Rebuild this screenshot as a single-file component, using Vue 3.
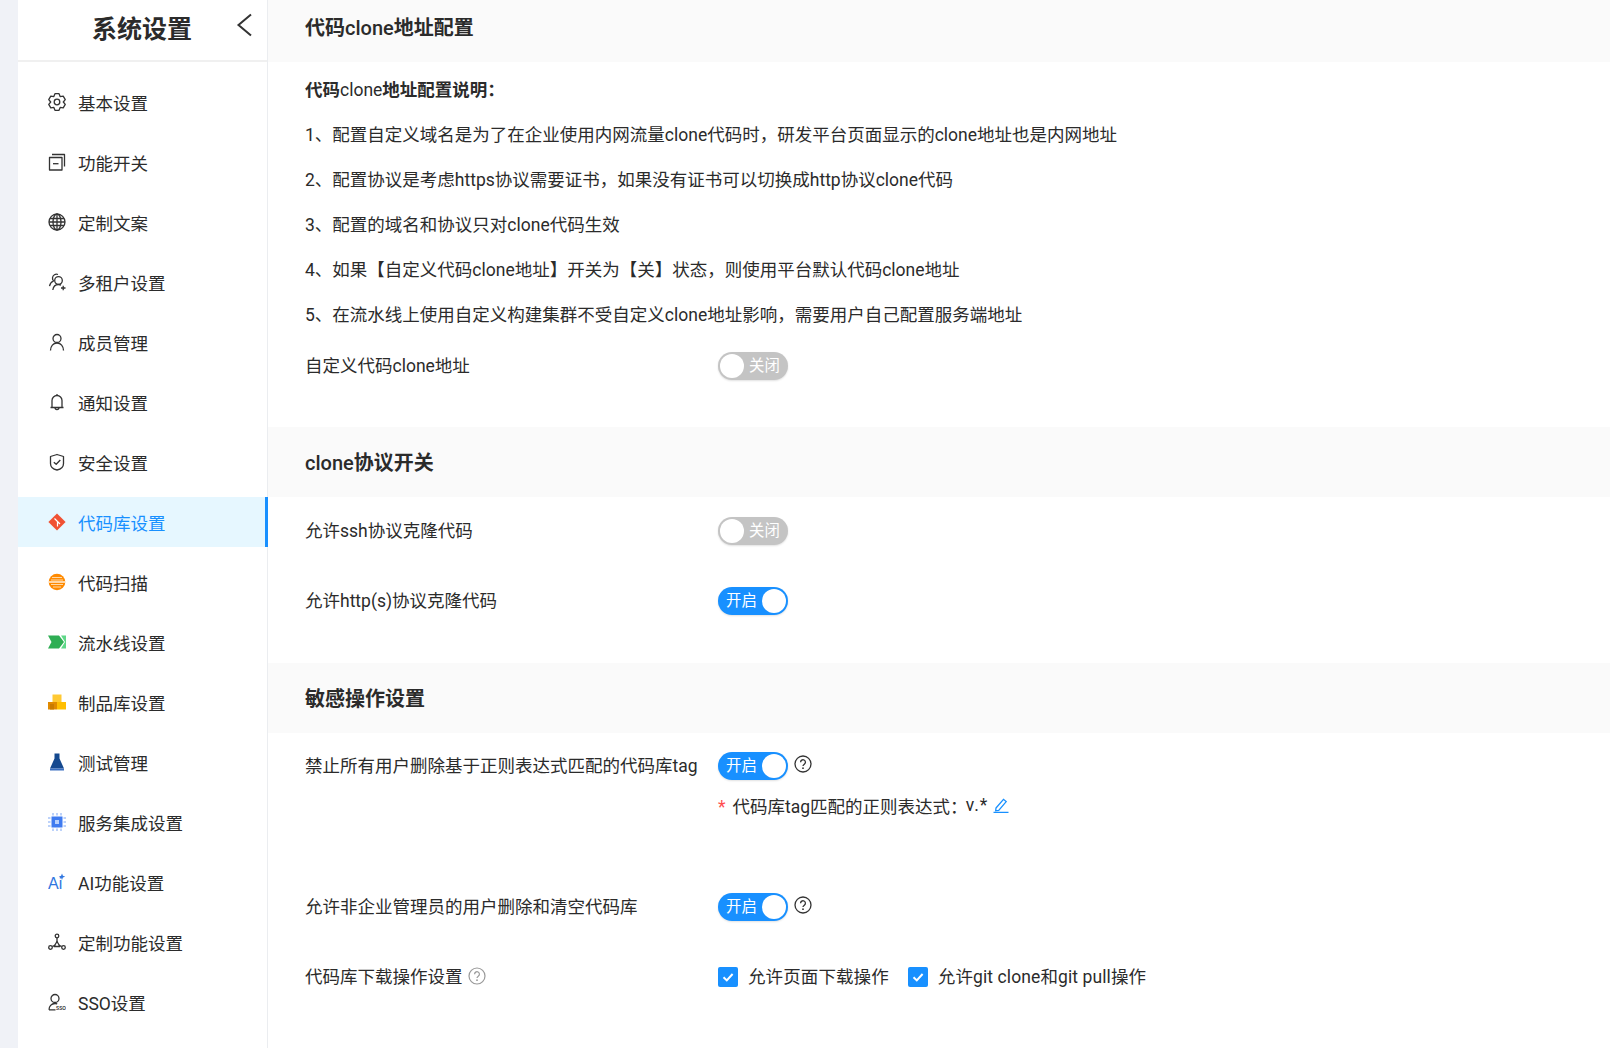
<template>
  <div class="page">
    <aside class="side">
      <div class="side-head">
        <span class="side-title">系统设置</span>
        <svg class="back" width="18" height="24" viewBox="0 0 18 24"><path d="M15 1.500 2.500 12 15 22.500" fill="none" stroke="#333" stroke-width="2" /></svg>
      </div>
      <ul class="menu">
        <li v-for="item in menu" :key="item.name" class="menu-item" :class="{ active: item.active }">
          <svg class="menu-icon" width="18" height="18" viewBox="0 0 18 18" v-html="item.icon" />
          <span>{{ item.name }}</span>
        </li>
      </ul>
    </aside>

    <main class="main">
      <h2 class="sec-title">代码<span class="lat">clone</span>地址配置</h2>
      <div class="notes">
        <p class="note-head">代码<span class="lat-plain">clone</span>地址配置说明：</p>
        <p v-for="n in notes" :key="n">{{ n }}</p>
      </div>
      <div class="row row-first">
        <label class="row-label">自定义代码clone地址</label>
        <span class="switch"><i class="knob"></i><em>关闭</em></span>
      </div>

      <h2 class="sec-title sec-2"><span class="lat">clone</span>协议开关</h2>
      <div class="row row-ssh">
        <label class="row-label">允许ssh协议克隆代码</label>
        <span class="switch"><i class="knob"></i><em>关闭</em></span>
      </div>
      <div class="row">
        <label class="row-label">允许http(s)协议克隆代码</label>
        <span class="switch on"><em>开启</em><i class="knob"></i></span>
      </div>

      <h2 class="sec-title sec-3">敏感操作设置</h2>
      <div class="row row-tag">
        <label class="row-label">禁止所有用户删除基于正则表达式匹配的代码库tag</label>
        <span class="switch on"><em>开启</em><i class="knob"></i></span>
        <svg class="help" width="18" height="18" viewBox="0 0 18 18"><circle cx="9" cy="9" r="8" fill="none" stroke="#333" stroke-width="1.300" /><path d="M6.600 7.200a2.400 2.400 0 1 1 3.800 1.900c-.8.6-1.400 1-1.400 2" fill="none" stroke="#333" stroke-width="1.300" /><circle cx="9" cy="13.200" r=".9" fill="#333" /></svg>
      </div>
      <div class="tag-rule">
        <span class="star">*</span>
        <span>代码库tag匹配的正则表达式：</span>
        <span class="tag-val">v.*</span>
        <svg width="16" height="16" viewBox="0 0 16 16"><path d="M3 11 10.500 2.300l2.700 2.300-7.500 8.700-3 .5z" fill="none" stroke="#1890ff" stroke-width="1.300" /><path d="M0.500 15.400h15" stroke="#1890ff" stroke-width="1.300" /></svg>
      </div>
      <div class="row row-repo">
        <label class="row-label">允许非企业管理员的用户删除和清空代码库</label>
        <span class="switch on"><em>开启</em><i class="knob"></i></span>
        <svg class="help" width="18" height="18" viewBox="0 0 18 18"><circle cx="9" cy="9" r="8" fill="none" stroke="#333" stroke-width="1.300" /><path d="M6.600 7.200a2.400 2.400 0 1 1 3.800 1.900c-.8.6-1.400 1-1.400 2" fill="none" stroke="#333" stroke-width="1.300" /><circle cx="9" cy="13.200" r=".9" fill="#333" /></svg>
      </div>
      <div class="row">
        <label class="row-label">
          代码库下载操作设置
          <svg class="hint" width="18" height="18" viewBox="0 0 18 18"><circle cx="9" cy="9" r="8" fill="none" stroke="#999" stroke-width="1.200" /><path d="M6.600 7.200a2.400 2.400 0 1 1 3.800 1.900c-.8.6-1.400 1-1.400 2" fill="none" stroke="#999" stroke-width="1.200" /><circle cx="9" cy="13.200" r=".9" fill="#999" /></svg>
        </label>
        <span class="check"><i class="box"><svg width="14" height="14" viewBox="0 0 14 14"><path d="M2.500 7.200 5.800 10.400 11.600 4" fill="none" stroke="#fff" stroke-width="2" /></svg></i><span class="check-text">允许页面下载操作</span></span>
        <span class="check"><i class="box"><svg width="14" height="14" viewBox="0 0 14 14"><path d="M2.500 7.200 5.800 10.400 11.600 4" fill="none" stroke="#fff" stroke-width="2" /></svg></i><span class="check-text">允许git clone和git pull操作</span></span>
      </div>
    </main>
  </div>
</template>

<script setup>
const line = 'fill="none" stroke="#333" stroke-width="1.300" stroke-linejoin="round"';

// six-lobed cog outline
function gearPath() {
  const pts = [];
  for (let i = 0; i < 6; i++) {
    const a = (Math.PI / 3) * i - Math.PI / 2;
    for (const [off, r] of [[-0.24, 8.6], [0.24, 8.6], [0.52, 6.3]]) {
      pts.push(`${(9 + Math.cos(a + off) * r).toFixed(2)} ${(9 + Math.sin(a + off) * r).toFixed(2)}`);
    }
  }
  return "M" + pts.join("L") + "z";
}

const menu = [
  { name: "基本设置", icon: `<path d="${gearPath()}" ${line}/><circle cx="9" cy="9" r="2.800" ${line}/>` },
  { name: "功能开关", icon: `<path d="M1.500 4.500h12.500v12.500h-12.500z" ${line}/><path d="M4 1.500h12.500v12" ${line}/><path d="M5 10.700h5.500" ${line}/>` },
  { name: "定制文案", icon: `<circle cx="9" cy="9" r="8" ${line}/><ellipse cx="9" cy="9" rx="4" ry="8" ${line}/><path d="M9 1v16M1 9h16M2 5.500h14M2 12.500h14" ${line}/>` },
  { name: "多租户设置", icon: `<circle cx="10.500" cy="7.500" r="3.800" ${line}/><path d="M4.800 17c.5-3.500 2.800-5.500 5.700-5.500 1 0 1.800.2 2.500.6M10 1.500C7.500.6 4.800 2 4.500 4.700c-.1 1.300.3 2.300 1 3.200-2.200 1-3.500 3-4 5.300M13 15h4.500M15.200 12.800v4.500" ${line}/>` },
  { name: "成员管理", icon: `<circle cx="9" cy="5.500" r="4" ${line}/><path d="M2.500 17.500c0-4.500 2.800-7.500 6.500-7.500s6.500 3 6.500 7.500" ${line}/>` },
  { name: "通知设置", icon: `<path d="M4 14.500V7.500a5 5 0 0 1 10 0v7M2.500 14.500h13M7 14.500c0 2.800 4 2.800 4 0M9 1v1.500" ${line}/>` },
  { name: "安全设置", icon: `<path d="M9 1.500l6.500 2v7c0 3.500-3 5.800-6.500 6.500-3.500-.7-6.500-3-6.500-6.500v-7z" ${line}/><path d="M5.800 9.200 8.200 11.300 12.300 7" ${line}/>` },
  { name: "代码库设置", active: true, icon: `<path d="M9 .4 17.600 9 9 17.600.4 9z" fill="#f05133"/><path d="M6.500 5.500 9.500 8.500M9.500 8.500v5M9.500 8.500l2.500 2.500" stroke="#fff" stroke-width="1.200" fill="none"/>` },
  { name: "代码扫描", icon: `<circle cx="9" cy="9" r="8.300" fill="#ff8a00"/><path d="M4 4.500h10M3 7h12" stroke="#ffd9a8" stroke-width="1"/><path d="M.7 9h16.600" stroke="#fff" stroke-width="1.300"/><path d="M3 11.500h12M5 14h8" stroke="#ffd9a8" stroke-width="1"/>` },
  { name: "流水线设置", icon: `<path d="M0 2.500h11l5 6.500-5 6.500H0l3.500-6.500z" fill="#2fae54"/><path d="M13 2.500h5v13h-5l4-6.500z" fill="#5fd888"/>` },
  { name: "制品库设置", icon: `<path d="M0 9h9v7.500H0z" fill="#e08a00"/><path d="M9 9h9v7.500H9z" fill="#ffbe00"/><path d="M4.500 1.500h9V9h-9z" fill="#ffc933"/><path d="M2 11h4v5.500H2z" fill="#c97a00"/>` },
  { name: "测试管理", icon: `<path d="M6.500 .5h5v5l4.500 10H2l4.500-10z" fill="#15498f"/><path d="M2 15.500h14v2H2z" fill="#3a6fc0"/>` },
  { name: "服务集成设置", icon: `<path d="M3.500 3.500h11v11h-11z" fill="#3f7bf0"/><path d="M7 7h4v4H7z" fill="#b8d0fb"/><path d="M5 0v2.500M9 0v2.500M13 0v2.500M5 15.500V18M9 15.500V18M13 15.500V18M0 5h2.500M0 9h2.500M0 13h2.500M15.500 5H18M15.500 9H18M15.500 13H18" stroke="#7aa5f5" stroke-width="1"/>` },
  { name: "AI功能设置", icon: `<text x="0" y="16.300" font-size="16" font-family="Liberation Sans" fill="#2f76e0">Ai</text><path d="M14 .5l.9 2.300 2.300.9-2.300.9-.9 2.300-.9-2.300-2.300-.9 2.300-.9z" fill="#2f76e0"/>` },
  { name: "定制功能设置", icon: `<circle cx="9" cy="3" r="1.800" ${line}/><circle cx="2.500" cy="14.500" r="1.800" ${line}/><circle cx="15.500" cy="14.500" r="1.800" ${line}/><path d="M9 4.800v4.400M4.300 13.500l3-1.500M13.700 13.500l-3-1.500" ${line}/><path d="M9 8.500 12 13.500H6z" ${line}/>` },
  { name: "SSO设置", icon: `<circle cx="7" cy="5.500" r="4" ${line}/><path d="M1 16.800c0-3.500 2.300-6.300 6-6.300.9 0 1.500.1 2.200.4M1 16.800h6.500" ${line}/><text x="8" y="16.800" font-size="4.700" font-weight="700" font-family="Liberation Sans" fill="#333">SSO</text>` },
];

const notes = [
  "1、配置自定义域名是为了在企业使用内网流量clone代码时，研发平台页面显示的clone地址也是内网地址",
  "2、配置协议是考虑https协议需要证书，如果没有证书可以切换成http协议clone代码",
  "3、配置的域名和协议只对clone代码生效",
  "4、如果【自定义代码clone地址】开关为【关】状态，则使用平台默认代码clone地址",
  "5、在流水线上使用自定义构建集群不受自定义clone地址影响，需要用户自己配置服务端地址",
];
</script>

<style>
html, body {
  margin: 0;
  background: #fff;
}
</style>

<style scoped>
.page {
  display: flex;
  height: 1048px;
  overflow: hidden;
  padding-left: 18px;
  background: #f0f2f7;
  box-sizing: border-box;
  font-family: Roboto, "Noto Sans CJK SC", sans-serif;
  font-size: 17.5px;
  color: #2b2b2b;
}

.side {
  width: 250px;
  flex: none;
  background: #fff;
  border-right: 1px solid #ebedf0;
  box-sizing: border-box;
}

.side-head {
  height: 62px;
  box-sizing: border-box;
  border-bottom: 2px solid #f0f0f0;
  display: flex;
  align-items: center;
  position: relative;
  padding-left: 74px;
}

.side-title {
  font-size: 25px;
  line-height: 54px;
  font-weight: 700;
  color: #2b2b2b;
}

.back {
  position: absolute;
  left: 218px;
  top: 13px;
}

.menu {
  list-style: none;
  margin: 0;
  padding: 15px 0 0;
}

.menu-item {
  height: 50px;
  margin-bottom: 10px;
  display: flex;
  align-items: center;
  gap: 12px;
  padding-left: 30px;
  box-sizing: border-box;
}

.menu-item.active {
  margin-right: -1px;
  background: #e6f7ff;
  color: #1890ff;
  border-right: 3px solid #1890ff;
}

.menu-icon {
  flex: none;
}

.main {
  flex: 1;
  background: #fff;
  min-width: 0;
}

.sec-title {
  margin: 0;
  height: 70px;
  line-height: 73px;
  padding-left: 37px;
  background: #fafafa;
  font-size: 20px;
  font-weight: 700;
}

.sec-title:first-child {
  height: 62px;
  line-height: 56px;
}

.lat {
  font-weight: 500;
}

.lat-plain {
  font-weight: 400;
}

.notes {
  padding: 6px 37px 0;
}

.notes p {
  margin: 0;
  height: 45px;
  line-height: 45px;
}

.notes .note-head {
  font-weight: 700;
}

.row {
  display: flex;
  align-items: center;
  height: 70px;
  padding-left: 37px;
}

.row-first {
  margin-top: 1px;
  height: 54px;
  margin-bottom: 34px;
}

.row-ssh {
  margin-top: -1px;
}

.row-label {
  width: 413px;
  flex: none;
  display: flex;
  align-items: center;
  gap: 5px;
  padding-bottom: 3px;
}

.switch {
  width: 70px;
  height: 28px;
  border-radius: 14px;
  background: #c4c4c4;
  box-sizing: border-box;
  padding: 0 2px;
  display: flex;
  align-items: center;
  gap: 5px;
  box-shadow: 0 1px 2px rgba(0, 0, 0, 0.12);
}

.switch em {
  font-style: normal;
  font-size: 15.4px;
  line-height: 28px;
  color: #fff;
}

.switch.on {
  background: #1890ff;
  padding-left: 8px;
}

.knob {
  width: 24px;
  height: 24px;
  border-radius: 50%;
  background: #fff;
  flex: none;
}

.help {
  margin-left: 6px;
  margin-top: -4px;
}

.sec-3 {
  margin-top: 27px;
}

.row-tag {
  height: 52px;
  margin-top: 7px;
}

.tag-rule {
  display: flex;
  align-items: center;
  height: 26px;
  padding-left: 450px;
  margin-bottom: 54px;
}

.star {
  color: #ff4d4f;
  margin-right: 7px;
  margin-top: 3px;
}

.tag-val {
  margin: 0 5px 0 -2px;
  letter-spacing: 1px;
}

.hint {
  flex: none;
}

.check {
  display: inline-flex;
  align-items: center;
  gap: 10px;
  margin-right: 19px;
}

.check-text {
  padding-bottom: 3px;
  letter-spacing: 0.1px;
}

.box {
  width: 20px;
  height: 20px;
  border-radius: 2px;
  background: #1890ff;
  display: flex;
  align-items: center;
  justify-content: center;
}
</style>
